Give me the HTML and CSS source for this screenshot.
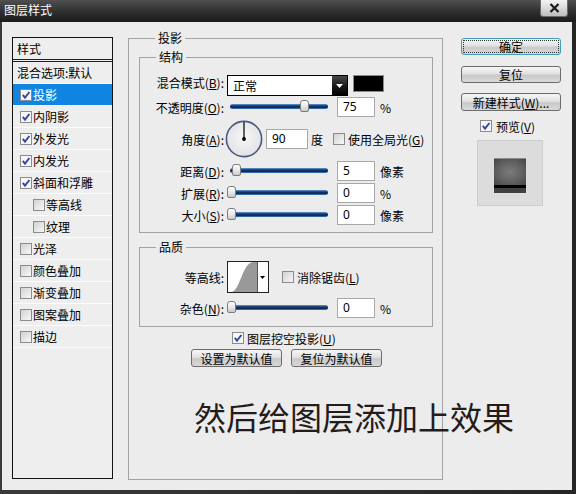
FILE: index.html
```html
<!DOCTYPE html>
<html>
<head>
<meta charset="utf-8">
<title>图层样式</title>
<link rel="stylesheet" href="styles.css">
</head>
<body>
<div class="win">
  <div class="titlebar">
    <span class="title">图层样式</span>
    <span class="close"><svg width="13" height="10" viewBox="0 0 13 10"><path d="M2.5 1 L10.5 9 M10.5 1 L2.5 9" stroke="#1c1c1c" stroke-width="2.2"/></svg></span>
  </div>
  <div class="body">
    <div class="list">
      <div class="list-head">样式</div>
      <div class="item plain">混合选项:默认</div>
      <div class="item sel"><span class="cb on"><svg width="10" height="10" viewBox="0 0 10 10"><path d="M1.8 4.8 L4 7.6 L8.4 2" fill="none" stroke="#3446a6" stroke-width="1.9"/></svg></span>投影</div>
      <div class="item"><span class="cb on"><svg width="10" height="10" viewBox="0 0 10 10"><path d="M1.8 4.8 L4 7.6 L8.4 2" fill="none" stroke="#3446a6" stroke-width="1.9"/></svg></span>内阴影</div>
      <div class="item"><span class="cb on"><svg width="10" height="10" viewBox="0 0 10 10"><path d="M1.8 4.8 L4 7.6 L8.4 2" fill="none" stroke="#3446a6" stroke-width="1.9"/></svg></span>外发光</div>
      <div class="item"><span class="cb on"><svg width="10" height="10" viewBox="0 0 10 10"><path d="M1.8 4.8 L4 7.6 L8.4 2" fill="none" stroke="#3446a6" stroke-width="1.9"/></svg></span>内发光</div>
      <div class="item"><span class="cb on"><svg width="10" height="10" viewBox="0 0 10 10"><path d="M1.8 4.8 L4 7.6 L8.4 2" fill="none" stroke="#3446a6" stroke-width="1.9"/></svg></span>斜面和浮雕</div>
      <div class="item sub"><span class="cb"></span>等高线</div>
      <div class="item sub"><span class="cb"></span>纹理</div>
      <div class="item"><span class="cb"></span>光泽</div>
      <div class="item"><span class="cb"></span>颜色叠加</div>
      <div class="item"><span class="cb"></span>渐变叠加</div>
      <div class="item"><span class="cb"></span>图案叠加</div>
      <div class="item"><span class="cb"></span>描边</div>
    </div>

    <div class="fs main">
      <div class="legend">投影</div>
      <div class="fs struct">
        <div class="legend">结构</div>
        <div class="rows">
          <div class="row top">
            <span class="lbl">混合模式(<u>B</u>):</span>
            <span class="select"><span class="sel-text">正常</span><span class="sel-arrow"><svg width="7" height="4" viewBox="0 0 7 4"><path d="M0 0 H7 L3.5 4 Z" fill="#fff"/></svg></span></span>
            <span class="swatch"></span>
          </div>
          <div class="row">
            <span class="lbl">不透明度(<u>O</u>):</span>
            <span class="slider"><span class="track"></span><span class="thumb" style="left:74px"></span></span>
            <span class="num">75</span><span class="unit">%</span>
          </div>
          <div class="row angle">
            <span class="lbl">角度(<u>A</u>):</span>
            <span class="dial"><svg width="38" height="38" viewBox="0 0 38 38"><defs><radialGradient id="dg" cx="50%" cy="45%" r="55%"><stop offset="0" stop-color="#f7f7f7"/><stop offset="1" stop-color="#e2e2e6"/></radialGradient></defs><circle cx="19" cy="19" r="17.6" fill="url(#dg)" stroke="#4c5680" stroke-width="1.6"/><path d="M19 19 V2" stroke="#111" stroke-width="1.3"/><circle cx="19" cy="19" r="1.9" fill="#000"/></svg></span>
            <span class="num wide">90</span><span class="unit deg">度</span>
            <span class="cb gl"></span><span class="cbl">使用全局光(<u>G</u>)</span>
          </div>
          <div class="row">
            <span class="lbl">距离(<u>D</u>):</span>
            <span class="slider"><span class="track"></span><span class="thumb" style="left:6px"></span></span>
            <span class="num">5</span><span class="unit">像素</span>
          </div>
          <div class="row">
            <span class="lbl">扩展(<u>R</u>):</span>
            <span class="slider"><span class="track"></span><span class="thumb" style="left:1px"></span></span>
            <span class="num">0</span><span class="unit">%</span>
          </div>
          <div class="row">
            <span class="lbl">大小(<u>S</u>):</span>
            <span class="slider"><span class="track"></span><span class="thumb" style="left:1px"></span></span>
            <span class="num">0</span><span class="unit">像素</span>
          </div>
        </div>
      </div>

      <div class="fs quality">
        <div class="legend">品质</div>
        <div class="qrows">
          <div class="row contour-row">
            <span class="lbl">等高线:</span>
            <span class="contour"><svg width="40" height="30" viewBox="0 0 40 30"><path d="M3 30 C 12 30, 14 1, 25 0 L 29 0 L 29 30 Z" fill="#999"/><path d="M29.5 0 V30" stroke="#555" stroke-width="1"/><path d="M32 14 H37 L34.5 17 Z" fill="#000"/></svg></span>
            <span class="cb aa"></span><span class="cbl">消除锯齿(<u>L</u>)</span>
          </div>
          <div class="row noise">
            <span class="lbl">杂色(<u>N</u>):</span>
            <span class="slider"><span class="track"></span><span class="thumb" style="left:1px"></span></span>
            <span class="num">0</span><span class="unit">%</span>
          </div>
        </div>
      </div>

      <div class="knock"><span class="cb on"><svg width="10" height="10" viewBox="0 0 10 10"><path d="M1.8 4.8 L4 7.6 L8.4 2" fill="none" stroke="#3446a6" stroke-width="1.9"/></svg></span><span class="cbl">图层挖空投影(<u>U</u>)</span></div>
      <div class="btnrow">
        <span class="btn def">设置为默认值</span>
        <span class="btn def">复位为默认值</span>
      </div>
    </div>

    <div class="side">
      <span class="btn ok">确定</span>
      <span class="btn reset">复位</span>
      <span class="btn newstyle">新建样式(<u>W</u>)...</span>
      <div class="pv-row"><span class="cb on"><svg width="10" height="10" viewBox="0 0 10 10"><path d="M1.8 4.8 L4 7.6 L8.4 2" fill="none" stroke="#3446a6" stroke-width="1.9"/></svg></span><span class="cbl">预览(<u>V</u>)</span></div>
      <div class="pv-box">
        <div class="pv-sq"><div class="pv-top"></div><div class="pv-black"></div><div class="pv-bot"></div></div>
      </div>
    </div>
  </div>
  <div class="overlay">然后给图层添加上效果</div>
</div>
</body>
</html>
```
FILE: styles.css
```css
* { box-sizing: border-box; }
html, body { margin: 0; padding: 0; }
body {
  font-family: "Noto Sans CJK SC", "Noto Sans", sans-serif;
  font-size: 12px;
  color: #000;
  background: #2c2c2c;
}
u { text-decoration: underline; text-underline-offset: 1px; }

.win {
  position: relative;
  width: 576px;
  height: 494px;
  background: linear-gradient(to right, #3a3a3a, #262626);
  overflow: hidden;
}

.titlebar {
  height: 22px;
  display: flex;
  align-items: flex-start;
  background: linear-gradient(#505050, #2e2e2e 55%, #1b1b1b);
}
.title {
  color: #fff;
  font-size: 12px;
  line-height: 19px;
  padding-left: 4px;
}
.close {
  margin-left: auto;
  margin-right: 8px;
  width: 28px;
  height: 17px;
  border: 1px solid #6a6a6a;
  border-top: none;
  border-radius: 0 0 3px 3px;
  background: linear-gradient(#f4f4f4, #dadada 50%, #bdbdbd);
  display: flex;
  align-items: center;
  justify-content: center;
}
.close svg { display: block; }

.body {
  margin: 0 4px 0 2px;
  height: 468px;
  background: #ececec;
  display: flex;
  align-items: flex-start;
  padding: 15px 0 0 10px;
}

/* left list */
.list {
  flex: none;
  width: 101px;
  height: 442px;
  border: 1px solid #121212;
  background: #eeeeee;
}
.list-head {
  height: 24px;
  border-bottom: 3px double #222;
  padding-left: 4px;
  line-height: 21px;
}
.item {
  height: 22px;
  border-bottom: 1px solid #fcfcfc;
  display: flex;
  align-items: center;
  padding-left: 7px;
  line-height: 21px;
  white-space: nowrap;
}
.item.plain { padding-left: 4px; }
.item.sub { padding-left: 20px; }
.item.sel { background: #0f84e0; color: #fff; }
.item .cb { margin-right: 1px; }

/* checkbox */
.cb {
  flex: none;
  display: inline-flex;
  align-items: center;
  justify-content: center;
  width: 12px;
  height: 12px;
  border: 1px solid #8b8b8b;
  background: linear-gradient(135deg, #d2d2d2, #f7f7f7);
}
.cb.on { background: #f6f6f6; }
.cb svg { display: block; }
.cbl { white-space: nowrap; }

/* fieldsets */
.fs { border: 1px solid #a2a2a2; }
.legend {
  height: 18px;
  line-height: 18px;
  margin: -10px 0 0 16px;
  padding: 0 3px;
  background: #ececec;
  width: max-content;
}
.main {
  flex: none;
  width: 315px;
  height: 442px;
  margin: 1px 0 0 15px;
  padding: 0 9px 0 10px;
}
.struct { margin-top: 10px; height: 176px; }
.rows { padding-top: 8px; }
.quality { margin-top: 14px; height: 80px; }
.qrows { padding-top: 2px; }

.row {
  display: flex;
  align-items: center;
  height: 22px;
  white-space: nowrap;
}
.row.top { align-items: flex-start; }
.row.angle { height: 42px; }
.row.contour-row { height: 38px; }
.row.noise { margin-top: 1px; }
.lbl {
  flex: none;
  width: 84px;
  text-align: right;
}

.select {
  flex: none;
  margin: 1px 0 0 3px;
  width: 121px;
  height: 21px;
  border: 1px solid #000;
  background: #fff;
  display: flex;
  align-items: stretch;
}
.sel-text { padding-left: 5px; line-height: 19px; }
.sel-arrow {
  margin-left: auto;
  width: 15px;
  background: linear-gradient(#4a4a4a, #1a1a1a 50%, #000);
  display: flex;
  align-items: center;
  justify-content: center;
}
.sel-arrow svg { display: block; }
.swatch {
  flex: none;
  margin: 1px 0 0 5px;
  width: 31px;
  height: 17px;
  background: #000;
  border: 1px solid #8a8a8a;
}

.slider {
  flex: none;
  position: relative;
  width: 103px;
  height: 14px;
  margin-left: 2px;
}
.track {
  display: block;
  margin: 4px 0 0 4px;
  width: 98px;
  height: 5px;
  border-radius: 3px;
  background: linear-gradient(#6b9ad6, #1a3f7a 35%, #0a2148 65%, #3f82d0);
}
.thumb {
  position: absolute;
  top: 0;
  width: 9px;
  height: 12px;
  border: 1px solid #7c7c7c;
  border-radius: 3px 3px 2px 2px;
  background: linear-gradient(#ffffff, #e4e4e4 60%, #c8c8c8);
}

.num {
  flex: none;
  margin-left: 8px;
  width: 38px;
  height: 20px;
  border: 1px solid #a8a8a8;
  background: #fff;
  padding-left: 5px;
  line-height: 18px;
  font-family: "Noto Sans", sans-serif;
}
.num.wide { margin-left: 3px; width: 42px; }
.unit { margin-left: 5px; }
.unit.deg { margin-left: 3px; }
.cb.gl { margin-left: 10px; }
.cb.gl + .cbl { margin-left: 3px; }

.dial { flex: none; margin-left: 1px; width: 38px; height: 38px; }
.dial svg { display: block; }

.contour {
  flex: none;
  margin-left: 3px;
  width: 42px;
  height: 32px;
  border: 1px solid #222;
  background: #fff;
}
.contour svg { display: block; }
.cb.aa { margin-left: 13px; }
.cb.aa + .cbl { margin-left: 3px; }

.knock {
  margin-top: 2px;
  height: 18px;
  display: flex;
  align-items: center;
  padding-left: 93px;
}
.knock .cbl { margin-left: 3px; }

.btnrow {
  margin-top: 2px;
  display: flex;
  gap: 9px;
  padding-left: 52px;
}

.btn {
  display: flex;
  align-items: center;
  justify-content: center;
  height: 17px;
  border: 1px solid #6c6c6c;
  border-radius: 3px;
  background: linear-gradient(#f6f6f6, #e2e2e2 45%, #c9c9c9 55%, #d9d9d9);
  line-height: 15px;
  white-space: nowrap;
}
.btn.def { width: 91px; height: 18px; }

.side {
  flex: none;
  width: 100px;
  margin: 1px 0 0 18px;
  display: flex;
  flex-direction: column;
}
.btn.ok {
  border-color: #3f9fb4;
  outline: 1px dotted #333;
  outline-offset: -3px;
}
.btn.reset { margin-top: 11px; }
.btn.newstyle { margin-top: 10px; height: 18px; }

.pv-row {
  margin-top: 7px;
  height: 16px;
  display: flex;
  align-items: center;
  padding-left: 19px;
}
.pv-row .cbl { margin-left: 4px; }
.pv-box {
  margin: 6px 0 0 16px;
  width: 66px;
  height: 66px;
  border: 1px solid #cdcdcd;
  background: #dcdcdc;
  padding: 17px 0 0 16px;
}
.pv-sq { width: 32px; }
.pv-top {
  height: 27px;
  border-top: 1px solid #8a8a8a;
  background: radial-gradient(ellipse at 50% 50%, #7c7c7c 0%, #5e5e5e 60%, #454545 100%);
}
.pv-black { height: 3px; background: #000; }
.pv-bot { height: 5px; background: #404040; }

.overlay {
  position: absolute;
  left: 194px;
  top: 400px;
  font-size: 32px;
  line-height: 32px;
  color: #241c1a;
  white-space: nowrap;
}
```
